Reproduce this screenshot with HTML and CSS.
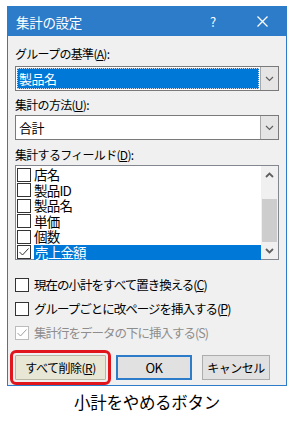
FILE: index.html
```html
<!DOCTYPE html>
<html lang="ja">
<head>
    <meta charset="UTF-8">
    <meta name="viewport" content="width=device-width, initial-scale=1.0">
    <link rel="stylesheet" href="styles.css">
    <title>集計の設定</title>
</head>
<body>
<div class="page">
    <div class="dialog">
        <div class="titlebar">
            <span class="title">集計の設定</span>
            <span class="help">?</span>
            <span class="close">
                <svg width="11" height="11" viewBox="0 0 11 11"><path d="M0.5 0.5 L10.5 10.5 M10.5 0.5 L0.5 10.5" stroke="#fff" stroke-width="1.3" fill="none"/></svg>
            </span>
        </div>

        <div class="body">
            <div class="label label-first">グループの基準(<u>A</u>):</div>
            <div class="combo">
                <div class="combo-value focused"><span class="sel">製品名</span></div>
                <div class="combo-btn">
                    <svg width="9" height="6" viewBox="0 0 9 6"><path d="M1 1 L4.5 4.5 L8 1" stroke="#606060" stroke-width="1.2" fill="none"/></svg>
                </div>
            </div>

            <div class="label">集計の方法(<u>U</u>):</div>
            <div class="combo combo-second">
                <div class="combo-value"><span>合計</span></div>
                <div class="combo-btn">
                    <svg width="9" height="6" viewBox="0 0 9 6"><path d="M1 1 L4.5 4.5 L8 1" stroke="#606060" stroke-width="1.2" fill="none"/></svg>
                </div>
            </div>

            <div class="label label-third">集計するフィールド(<u>D</u>):</div>
            <div class="listbox">
                <div class="items">
                    <div class="row"><span class="box"></span><span class="item-text">店名</span></div>
                    <div class="row"><span class="box"></span><span class="item-text">製品ID</span></div>
                    <div class="row"><span class="box"></span><span class="item-text">製品名</span></div>
                    <div class="row"><span class="box"></span><span class="item-text">単価</span></div>
                    <div class="row"><span class="box"></span><span class="item-text">個数</span></div>
                    <div class="row row-selected">
                        <span class="box">
                            <svg width="12" height="12" viewBox="0 0 12 12"><path d="M1.5 6 L4.5 9 L10.5 2.5" stroke="#333" stroke-width="1" fill="none"/></svg>
                        </span>
                        <span class="item-text">売上金額</span>
                    </div>
                </div>
                <div class="scrollbar">
                    <div class="arrow">
                        <svg width="9" height="6" viewBox="0 0 9 6"><path d="M1 5 L4.5 1.5 L8 5" stroke="#606060" stroke-width="1.8" fill="none"/></svg>
                    </div>
                    <div class="track"><div class="thumb"></div></div>
                    <div class="arrow">
                        <svg width="9" height="6" viewBox="0 0 9 6"><path d="M1 1 L4.5 4.5 L8 1" stroke="#606060" stroke-width="1.8" fill="none"/></svg>
                    </div>
                </div>
            </div>

            <div class="options">
                <div class="option"><span class="box"></span><span>現在の小計をすべて置き換える(<u>C</u>)</span></div>
                <div class="option"><span class="box"></span><span>グループごとに改ページを挿入する(<u>P</u>)</span></div>
                <div class="option option-disabled">
                    <span class="box">
                        <svg width="12" height="12" viewBox="0 0 12 12"><path d="M1.5 6 L4.5 9 L10.5 2.5" stroke="#a0a0a0" stroke-width="1" fill="none"/></svg>
                    </span>
                    <span>集計行をデータの下に挿入する(S)</span>
                </div>
            </div>

            <div class="buttons">
                <button class="btn btn-marked">すべて削除(<u>R</u>)</button>
                <button class="btn btn-default">OK</button>
                <button class="btn btn-cancel">キャンセル</button>
            </div>
        </div>
    </div>

    <div class="caption">小計をやめるボタン</div>
</div>
</body>
</html>
```

FILE: styles.css
```css
html, body
{
    margin: 0;
    background-color: #fff;
}

.page
{
    padding: 6px 0 0 7px;
    font-family: "Noto Sans CJK JP", "Noto Sans", sans-serif;
    color: #000;
}

.dialog
{
    width: 278px;
    border: 1px solid #2d7cc9;
    background-color: #f0f0f0;
}

.titlebar
{
    height: 29px;
    background-color: #2d7cc9;
    color: #fff;
    display: flex;
    align-items: center;
    padding-left: 8px;
    line-height: 18px;
}

.title
{
    font-size: 13.5px;
    letter-spacing: -0.3px;
    flex: 1;
}

.help
{
    font-size: 13px;
    width: 10px;
    margin-right: 37px;
}

.close
{
    display: flex;
    margin-right: 18px;
}

.body
{
    padding: 9px 7px 5px 7px;
}

.label
{
    font-size: 12px;
    letter-spacing: -0.7px;
    line-height: 17px;
    height: 17px;
    margin-top: 5px;
}

.label-first
{
    margin-top: 0;
}

.label-third
{
    margin-top: 6px;
}

.combo
{
    margin-top: 4px;
    height: 25px;
    box-sizing: border-box;
    border: 1px solid #7a7a7a;
    background-color: #fff;
    display: flex;
}

.combo-second
{
    margin-top: 2px;
}

.combo-value
{
    flex: 1;
    display: flex;
    align-items: center;
    padding: 1px;
    font-size: 13px;
    letter-spacing: -0.5px;
    line-height: 18px;
}

.combo-value span
{
    padding-left: 2px;
}

.combo-value .sel
{
    flex: 1;
    height: 100%;
    display: flex;
    align-items: center;
    background-color: #0078d7;
    color: #fff;
    box-sizing: border-box;
    outline: 1px dotted #c8d8ea;
    outline-offset: -1px;
}

.combo-btn
{
    width: 17px;
    background-color: #e5e5e5;
    border-left: 1px solid #a8a8a8;
    display: flex;
    align-items: center;
    justify-content: center;
}

.listbox
{
    margin-top: 2px;
    height: 95px;
    box-sizing: border-box;
    border: 1px solid #828790;
    background-color: #fff;
    display: flex;
}

.items
{
    flex: 1;
    padding-top: 1px;
}

.row
{
    height: 15.5px;
    line-height: 15.5px;
    display: flex;
    align-items: center;
    font-size: 13.5px;
    letter-spacing: -0.8px;
}

.row .box
{
    margin-left: 1px;
    margin-right: 3px;
}

.row-selected .item-text
{
    flex: 1;
    background-color: #0078d7;
    color: #fff;
    padding-left: 1px;
}

.box
{
    width: 12px;
    height: 12px;
    border: 1px solid #333;
    background-color: #fff;
    display: inline-flex;
    flex-shrink: 0;
}

.scrollbar
{
    width: 17px;
    background-color: #f0f0f0;
    display: flex;
    flex-direction: column;
}

.arrow
{
    height: 17px;
    display: flex;
    align-items: center;
    justify-content: center;
}

.track
{
    flex: 1;
    display: flex;
    flex-direction: column;
    justify-content: flex-end;
}

.thumb
{
    height: 43px;
    margin: 0 1px;
    background-color: #cdcdcd;
}

.options
{
    margin-top: 13px;
}

.option
{
    height: 24px;
    line-height: 18px;
    display: flex;
    align-items: center;
    font-size: 12.5px;
    letter-spacing: -1px;
}

.option .box
{
    margin-right: 5px;
}

.option-disabled
{
    color: #8d8d8d;
}

.option-disabled .box
{
    border-color: #bcbcbc;
}

.buttons
{
    margin-top: 10px;
    height: 25px;
    display: flex;
    gap: 10px;
}

.btn
{
    height: 25px;
    box-sizing: border-box;
    border: 1px solid #adadad;
    background-color: #e1e1e1;
    font-family: "Noto Sans CJK JP", "Noto Sans", sans-serif;
    font-size: 12px;
    letter-spacing: -0.5px;
    line-height: 18px;
    color: #000;
    padding: 0;
}

.btn-marked
{
    width: 91px;
    background-color: #e8e6d5;
    border-color: #b8b6a6;
    outline: 3px solid #e0161c;
    outline-offset: 2px;
    border-radius: 1px;
}

.btn-default
{
    width: 76px;
    border: 2px solid #2d7cc9;
    font-size: 13px;
}

.btn-cancel
{
    width: 68px;
}

.caption
{
    width: 280px;
    text-align: center;
    font-size: 16.5px;
    letter-spacing: -0.3px;
    line-height: 22px;
    margin-top: 5px;
}
```
